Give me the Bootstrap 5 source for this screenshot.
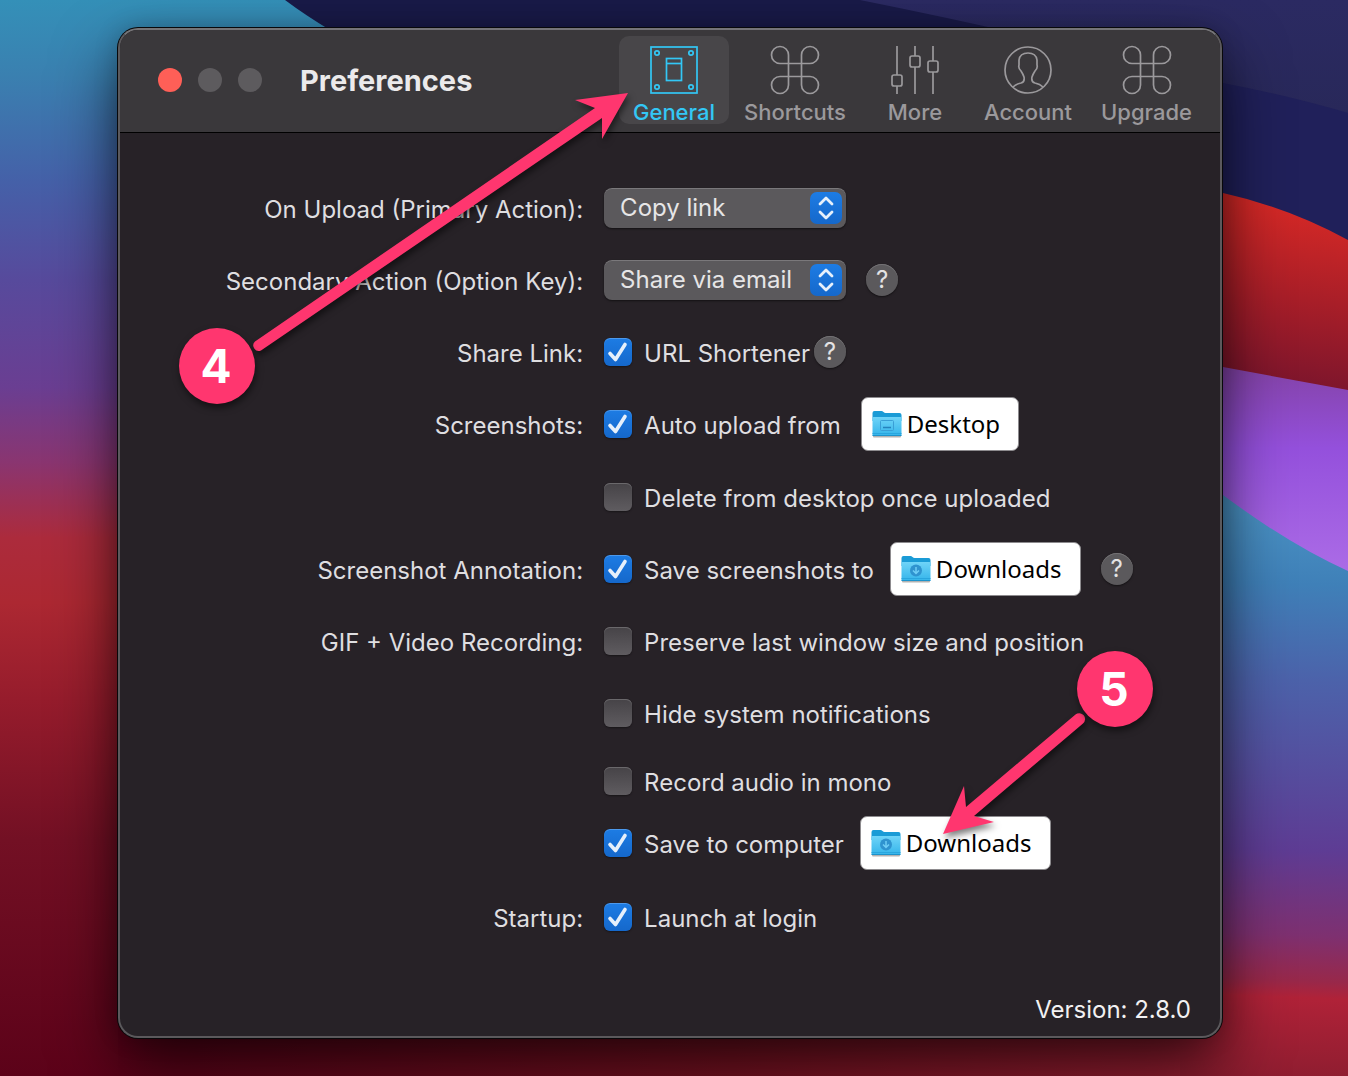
<!DOCTYPE html>
<html lang="en" data-bs-theme="dark">
<head>
<meta charset="utf-8">
<meta name="viewport" content="width=device-width, initial-scale=1">
<title>Preferences</title>
<link href="https://cdn.jsdelivr.net/npm/bootstrap@5.3.0/dist/css/bootstrap.min.css" rel="stylesheet">
<style>
  body { font-family: Inter, "Liberation Sans", sans-serif; font-size: 24px; line-height: 32px; color: #dfdee0; background: #5c0a1c; }
  .desktop { min-height: 100vh; padding: 28px 126px 38px 118px; }
  .wallpaper { inset: 0; width: 100%; height: 100%; }
  .pref-window { border: 2px solid #5b595c; border-top-color: #757477; border-radius: 20px; background: #272227;
    box-shadow: 0 0 0 1px #08080a, 0 30px 64px rgba(0,0,0,.65), 0 0 24px rgba(0,0,0,.2); }
  .titlebar { background: #3a383b; border-bottom: 1px solid #000; border-radius: 18px 18px 0 0; padding: 6px 14px 8px 38px; }
  .lights { gap: 16px; margin-right: 38px; }
  .light { width: 24px; height: 24px; border-radius: 50%; border: 0; padding: 0; background: #5d5b5e; }
  .light-close { background: #ff5f57; }
  .win-title { font-size: 29px; line-height: 36px; font-weight: 700; color: #ebeaeb; padding-top: 2px; }
  .tools { gap: 1px; }
  .tools .nav-link { min-width: 108px; height: 88px; padding: 9px 14px 0; border-radius: 10px; color: #9b999c; font-size: 22px; line-height: 28px; font-weight: 500; text-align: center; }
  .tools .nav-link.active { color: #33c7f5; background: #484649; }
  .tools svg { display: block; width: 50px; height: 50px; margin: 0 auto 3px; fill: none; stroke: currentColor; stroke-width: 1.7; }
  .pref-row { min-height: 72px; }
  .row-tall { min-height: 73px; }
  .row-mid { min-height: 64px; }
  .row-short { min-height: 60px; }
  .row-last { min-height: 88px; }
  .pref-name { flex: 0 0 42.1%; text-align: right; padding-top: 4px; white-space: nowrap; }
  .pref-ctl { padding-left: 21px; white-space: nowrap; }
  .mac-select { width: 242px; height: 40px; padding: 0 44px 0 16px; border: 0; border-radius: 8px; font-size: 24px; line-height: 32px; color: #e6e5e6; appearance: none;
    background: #5b595c url("data:image/svg+xml,%3Csvg xmlns='http://www.w3.org/2000/svg' viewBox='0 0 32 32'%3E%3ClinearGradient id='g' x2='0' y2='1'%3E%3Cstop stop-color='%231d7ce4'/%3E%3Cstop offset='1' stop-color='%231568cb'/%3E%3C/linearGradient%3E%3Crect width='32' height='32' rx='7' fill='url(%23g)'/%3E%3Cpath d='M10 12L16 6l6 6M10 20l6 6 6-6' fill='none' stroke='%23e6f0fb' stroke-width='2.800' stroke-linecap='round' stroke-linejoin='round'/%3E%3C/svg%3E") no-repeat right 4px center / 32px 32px;
    box-shadow: inset 0 1px 0 #7a787b, 0 1px 2px rgba(0,0,0,.5); }
  .pref-ctl .form-check-input { width: 28px; height: 28px; margin: 0 12px 0 0; border: 0; border-radius: 6px; flex: none;
    background: linear-gradient(#464347, #5f5c60); box-shadow: inset 0 1px 0 #6a686b, 0 1px 2px rgba(0,0,0,.4); }
  .pref-ctl .form-check-input:checked { box-shadow: inset 0 1px 0 #4c99ec, 0 1px 2px rgba(0,0,0,.4);
    background: url("data:image/svg+xml,%3Csvg xmlns='http://www.w3.org/2000/svg' viewBox='0 0 28 28'%3E%3Cpath d='M6 15.500l5.500 6L21 6.500' fill='none' stroke='%23e6f0fb' stroke-width='3.600' stroke-linecap='round' stroke-linejoin='round'/%3E%3C/svg%3E") center / 28px 28px, linear-gradient(#1d7ce4, #1568cb); }
  .pref-ctl .form-check-label { padding-top: 4px; }
  .help { width: 32px; height: 32px; padding: 0; border: 0; border-radius: 50%; background: #5b595c; color: #e4e3e4; font-size: 24px; line-height: 32px;
    box-shadow: inset 0 1px 0 #737174, 0 1px 2px rgba(0,0,0,.5); }
  .folder { height: 54px; padding: 0 18px 0 10px; border: 1px solid #8d8b8e; border-radius: 7px; background: #fff; color: #000; gap: 5px;
    font-family: "Noto Sans", sans-serif; font-size: 24px; line-height: 32px; }
  .folder svg { width: 30px; height: 30px; flex: none; }
  .gap-near { margin-left: 4px; }
  .gap-mid { margin-left: 16px; }
  .gap-far { margin-left: 20px; }
  .version { padding: 33px 29px 9px; color: #f2f1f2; }
  .markup { inset: 0; width: 100%; height: 100%; pointer-events: none; overflow: visible; filter: drop-shadow(2px 4px 3px rgba(0,0,0,.5)); }
  .step { width: 76px; height: 76px; padding-right: 2px; border-radius: 50%; background: #ff366f; color: #fff; font-size: 46px; font-weight: 700; box-shadow: 1px 4px 7px rgba(0,0,0,.5); }
  .step-four { left: 59px; top: 298px; }
  .step-five { left: 957px; top: 621px; }
</style>
<script src="https://cdn.jsdelivr.net/npm/bootstrap@5.3.0/dist/js/bootstrap.bundle.min.js"></script>
</head>
<body>
<svg width="0" height="0" class="position-absolute" aria-hidden="true">
  <defs>
    <linearGradient id="fold" x2="0" y2="1"><stop stop-color="#6fd4f8"/><stop offset="1" stop-color="#34b4ea"/></linearGradient>
    <symbol id="folder-base" viewBox="0 0 30 30">
      <rect x="1" y="26" width="28" height="2.500" rx="1" fill="#000" opacity=".3"/>
      <path d="M.5 4q0-2 2-2h7q1 0 2 1t2 1h14q2 0 2 2v6H.5z" fill="#1a9bd6"/>
      <path d="M.5 9q0-1 1-1h27q1 0 1 1v17q0 1-1 1h-27q-1 0-1-1z" fill="url(#fold)"/>
      <path d="M.5 24.500h29" stroke="#2aa6de"/>
      <path d="M.5 26.500h29" stroke="#1c93cc"/>
    </symbol>
    <symbol id="folder-desktop" viewBox="0 0 30 30">
      <use href="#folder-base"/>
      <rect x="8.500" y="11.500" width="13" height="10" rx="1" fill="none" stroke="#3a9fd6"/>
      <path d="M11 18.500h8" stroke="#2583bd" stroke-width="1.500"/>
    </symbol>
    <symbol id="folder-downloads" viewBox="0 0 30 30">
      <use href="#folder-base"/>
      <circle cx="15" cy="16.500" r="6" fill="#2f93cf"/>
      <path d="M15 13v6.500m-3-3l3 3 3-3" fill="none" stroke="#6fcdf5" stroke-width="1.500"/>
    </symbol>
    <symbol id="command" viewBox="0 0 50 50">
      <path d="M18.500 18.500h13v13h-13zM18.500 18.500V10A8.500 8.500 0 1 0 10 18.500zM31.500 18.500V10A8.500 8.500 0 1 1 40 18.500zM18.500 31.500V40A8.500 8.500 0 1 1 10 31.500zM31.500 31.500V40A8.500 8.500 0 1 0 40 31.500z"/>
    </symbol>
  </defs>
</svg>
<div class="desktop position-relative d-flex flex-column">
  <svg class="wallpaper position-absolute" viewBox="0 0 1348 1076" preserveAspectRatio="none" aria-hidden="true">
    <defs>
      <linearGradient id="leftSky" x1="0" y1="0" x2="0" y2="1076" gradientUnits="userSpaceOnUse">
        <stop stop-color="#3490b8"/><stop offset=".07" stop-color="#3a80b0"/><stop offset=".17" stop-color="#4560a8"/><stop offset=".26" stop-color="#574a9c"/><stop offset=".36" stop-color="#6a3e92"/><stop offset=".43" stop-color="#8a3570"/><stop offset=".5" stop-color="#ac2b3c"/><stop offset=".56" stop-color="#ac2832"/><stop offset=".65" stop-color="#961c2c"/><stop offset=".78" stop-color="#731024"/><stop offset="1" stop-color="#5c0219"/>
      </linearGradient>
      <linearGradient id="floor"><stop stop-color="#5c0219"/><stop offset=".5" stop-color="#7a1222"/><stop offset=".9" stop-color="#9c2034"/><stop offset="1" stop-color="#96203a"/></linearGradient>
      <linearGradient id="navy" x2="0" y2="1"><stop stop-color="#2b2a62"/><stop offset="1" stop-color="#282859"/></linearGradient>
      <linearGradient id="redBand" x1="1300" y1="210" x2="1275" y2="385" gradientUnits="userSpaceOnUse"><stop stop-color="#d32826"/><stop offset=".5" stop-color="#a81e28"/><stop offset="1" stop-color="#7c152c"/></linearGradient>
      <linearGradient id="violet" x1="0" y1="367" x2="0" y2="570" gradientUnits="userSpaceOnUse"><stop stop-color="#8443a8"/><stop offset=".4" stop-color="#9450dc"/><stop offset="1" stop-color="#ab6be6"/></linearGradient>
      <linearGradient id="rightSea" x1="1290" y1="510" x2="1270" y2="1076" gradientUnits="userSpaceOnUse"><stop stop-color="#4a92c4"/><stop offset=".13" stop-color="#3f80b8"/><stop offset=".3" stop-color="#4c62aa"/><stop offset=".6" stop-color="#5e3c94"/><stop offset=".75" stop-color="#7e3070"/><stop offset=".83" stop-color="#98284a"/><stop offset=".86" stop-color="#b02238"/><stop offset="1" stop-color="#8f1d30"/></linearGradient>
    </defs>
    <rect width="1348" height="1076" fill="url(#leftSky)"/>
    <rect x="118" y="900" width="1230" height="176" fill="url(#floor)"/>
    <path d="M285 0Q305 15 330 30L700 300H1348V0z" fill="#191a48"/>
    <path d="M860 0Q1060 40 1200 80L1348 120V0z" fill="url(#navy)"/>
    <path d="M1180 78L1223 83Q1290 96 1348 113V260H1180z" fill="#20205a"/>
    <path d="M1180 188L1223 193Q1290 208 1348 240V400H1180z" fill="url(#redBand)"/>
    <path d="M1100 355L1223 367 1348 390V600H1100z" fill="url(#violet)"/>
    <path d="M1180 470L1223 495Q1290 545 1348 571V1076H1180z" fill="url(#rightSea)"/>
  </svg>

  <main class="pref-window position-relative d-flex flex-column flex-grow-1">
    <header class="titlebar d-flex align-items-center">
      <div class="lights d-flex">
        <button class="light light-close" type="button" aria-label="Close"></button>
        <button class="light" type="button" aria-label="Minimize"></button>
        <button class="light" type="button" aria-label="Zoom"></button>
      </div>
      <h1 class="win-title mb-0">Preferences</h1>
      <nav class="tools nav ms-auto flex-nowrap">
        <a class="nav-link active" href="#general" aria-current="page"><svg viewBox="0 0 50 50"><rect x="2" y="2" width="46" height="46"/><rect x="17.500" y="13.500" width="15" height="22"/><path d="M17.500 18.500h15"/><circle cx="8" cy="8" r="2.200"/><circle cx="42" cy="8" r="2.200"/><circle cx="8" cy="42" r="2.200"/><circle cx="42" cy="42" r="2.200"/></svg>General</a>
        <a class="nav-link" href="#shortcuts"><svg><use href="#command"/></svg>Shortcuts</a>
        <a class="nav-link" href="#more"><svg viewBox="0 0 50 50"><path d="M7 1v29M7 41v8M25 1v10M25 22v27M43 1v15M43 27v22"/><rect x="2" y="30" width="10" height="11" rx="2"/><rect x="20" y="11" width="10" height="11" rx="2"/><rect x="38" y="16" width="10" height="11" rx="2"/></svg>More</a>
        <a class="nav-link" href="#account"><svg viewBox="0 0 50 50"><circle cx="25" cy="25" r="23"/><path d="M10 42q3-3 8-4 4-1 3-6-1-3-3-6-3-3-2-6V15q1-7 9-7t9 7v5q1 3-2 6-2 3-3 6-1 5 3 6 5 1 8 4"/></svg>Account</a>
        <a class="nav-link" href="#upgrade"><svg><use href="#command"/></svg>Upgrade</a>
      </nav>
    </header>

    <form class="flex-grow-1" style="padding-top:39px">
      <div class="pref-row d-flex align-items-center">
        <label class="pref-name" for="primary">On Upload (Primary Action):</label>
        <div class="pref-ctl d-flex align-items-center"><select class="mac-select" id="primary"><option>Copy link</option></select></div>
      </div>
      <div class="pref-row d-flex align-items-center">
        <label class="pref-name" for="secondary">Secondary Action (Option Key):</label>
        <div class="pref-ctl d-flex align-items-center"><select class="mac-select" id="secondary"><option>Share via email</option></select><button class="help gap-far" type="button">?</button></div>
      </div>
      <div class="pref-row d-flex align-items-center">
        <div class="pref-name">Share Link:</div>
        <div class="pref-ctl d-flex align-items-center"><input class="form-check-input" type="checkbox" id="shortener" checked><label class="form-check-label" for="shortener">URL Shortener</label><button class="help gap-near" type="button">?</button></div>
      </div>
      <div class="pref-row d-flex align-items-center">
        <div class="pref-name">Screenshots:</div>
        <div class="pref-ctl d-flex align-items-center"><input class="form-check-input" type="checkbox" id="auto" checked><label class="form-check-label" for="auto">Auto upload from</label><button class="folder gap-far d-flex align-items-center" type="button"><svg><use href="#folder-desktop"/></svg>Desktop</button></div>
      </div>
      <div class="pref-row row-tall d-flex align-items-center">
        <div class="pref-name"></div>
        <div class="pref-ctl d-flex align-items-center"><input class="form-check-input" type="checkbox" id="delete"><label class="form-check-label" for="delete">Delete from desktop once uploaded</label></div>
      </div>
      <div class="pref-row d-flex align-items-center">
        <div class="pref-name">Screenshot Annotation:</div>
        <div class="pref-ctl d-flex align-items-center"><input class="form-check-input" type="checkbox" id="saveshots" checked><label class="form-check-label" for="saveshots">Save screenshots to</label><button class="folder gap-mid d-flex align-items-center" type="button"><svg><use href="#folder-downloads"/></svg>Downloads</button><button class="help gap-far" type="button">?</button></div>
      </div>
      <div class="pref-row d-flex align-items-center">
        <div class="pref-name">GIF + Video Recording:</div>
        <div class="pref-ctl d-flex align-items-center"><input class="form-check-input" type="checkbox" id="preserve"><label class="form-check-label" for="preserve">Preserve last window size and position</label></div>
      </div>
      <div class="pref-row d-flex align-items-center">
        <div class="pref-name"></div>
        <div class="pref-ctl d-flex align-items-center"><input class="form-check-input" type="checkbox" id="hide"><label class="form-check-label" for="hide">Hide system notifications</label></div>
      </div>
      <div class="row-mid d-flex align-items-center">
        <div class="pref-name"></div>
        <div class="pref-ctl d-flex align-items-center"><input class="form-check-input" type="checkbox" id="mono"><label class="form-check-label" for="mono">Record audio in mono</label></div>
      </div>
      <div class="row-short d-flex align-items-center">
        <div class="pref-name"></div>
        <div class="pref-ctl d-flex align-items-center"><input class="form-check-input" type="checkbox" id="savecomp" checked><label class="form-check-label" for="savecomp">Save to computer</label><button class="folder gap-mid d-flex align-items-center" type="button"><svg><use href="#folder-downloads"/></svg>Downloads</button></div>
      </div>
      <div class="row-last d-flex align-items-center">
        <div class="pref-name">Startup:</div>
        <div class="pref-ctl d-flex align-items-center"><input class="form-check-input" type="checkbox" id="launch" checked><label class="form-check-label" for="launch">Launch at login</label></div>
      </div>
      <div class="version text-end">Version: 2.8.0</div>
    </form>

    <svg class="markup position-absolute" viewBox="120 30 1100 1006" aria-hidden="true">
      <g fill="#ff366f">
        <path d="M255 341.500L595 108 575 100 628 93 602 139 602 118 261 350.500A5.500 5.500 0 0 1 255 341.500z"/>
        <path d="M1075.500 714.500L966 807 964 786 943 834 994 822 974 816 1083 723.500A5.700 5.700 0 0 0 1075.500 714.500z"/>
      </g>
    </svg>
    <div class="step step-four position-absolute d-flex align-items-center justify-content-center">4</div>
    <div class="step step-five position-absolute d-flex align-items-center justify-content-center">5</div>
  </main>
</div>
</body>
</html>
